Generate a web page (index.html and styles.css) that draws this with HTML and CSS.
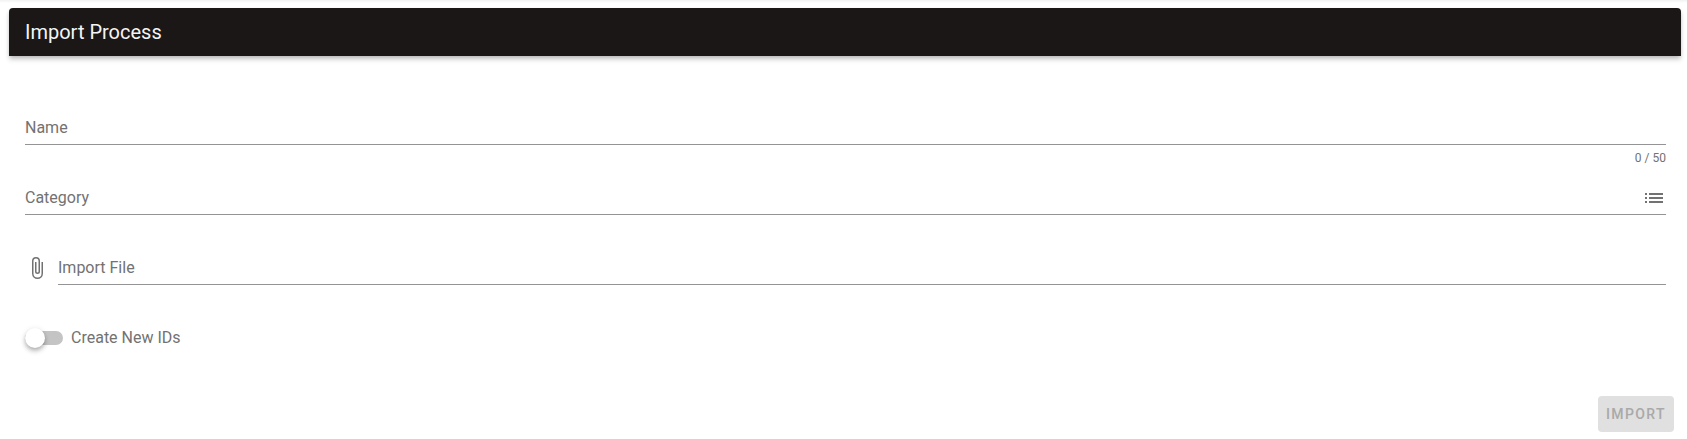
FILE: index.html
```html
<!DOCTYPE html>
<html lang="en">
<head>
    <meta charset="UTF-8">
    <title>Import Process</title>
    <link rel="stylesheet" href="styles.css">
</head>
<body>
    <div class="card">
        <div class="card-title">Import Process</div>
        <form class="card-form">
            <div class="field">
                <div class="field-line"><span class="field-label">Name</span></div>
                <div class="field-details">0 / 50</div>
            </div>
            <div class="field">
                <div class="field-line">
                    <span class="field-label">Category</span>
                    <svg class="icon" viewBox="0 0 24 24"><path d="M3 13h2v-2H3v2zm0 4h2v-2H3v2zm0-8h2V7H3v2zm4 4h14v-2H7v2zm0 4h14v-2H7v2zM7 7v2h14V7H7z"/></svg>
                </div>
                <div class="field-details"></div>
            </div>
            <div class="field field-file">
                <svg class="icon clip" viewBox="0 0 24 24"><path d="M16.5,6V17.5A4,4 0 0,1 12.5,21.5A4,4 0 0,1 8.5,17.5V5A2.5,2.5 0 0,1 11,2.5A2.5,2.5 0 0,1 13.5,5V15.5A1,1 0 0,1 12.5,16.5A1,1 0 0,1 11.5,15.5V6H10V15.5A2.5,2.5 0 0,0 12.5,18A2.5,2.5 0 0,0 15,15.5V5A4,4 0 0,0 11,1A4,4 0 0,0 7,5V17.5A5.5,5.5 0 0,0 12.5,23A5.5,5.5 0 0,0 18,17.5V6H16.5Z"/></svg>
                <div class="field-line"><span class="field-label">Import File</span></div>
            </div>
            <div class="switch-row">
                <div class="switch"><span class="switch-thumb"></span></div>
                <span class="field-label">Create New IDs</span>
            </div>
        </form>
        <div class="card-actions">
            <button class="btn-import" type="button" disabled>Import</button>
        </div>
    </div>
</body>
</html>
```

FILE: styles.css
```css
* {
    box-sizing: border-box;
    margin: 0;
    padding: 0;
    font-family: Roboto, Arial, sans-serif;
}

body {
    background: linear-gradient(#f1f1f1, #fff 3px);
    height: 439px;
    overflow: hidden;
    padding: 8px 6px 0 9px;
}

.card {
    height: 430px;
    background-color: #fff;
    border-radius: 4px;
    display: flex;
    flex-direction: column;
}

.card-title {
    height: 48px;
    line-height: 48px;
    padding: 0 16px;
    font-size: 20px;
    color: #f4f4f4;
    background-color: #1a1716;
    border-radius: 4px 4px 0 0;
    box-shadow: 0 2px 4px -1px rgba(0, 0, 0, 0.2),
                0 4px 5px 0 rgba(0, 0, 0, 0.14);
}

.card-form {
    flex: 1;
    padding: 55px 15px 0 16px;
}

.field {
    height: 70px;
}

.field-line {
    height: 34px;
    flex: 1;
    display: flex;
    align-items: center;
    justify-content: space-between;
    border-bottom: 1px solid #949494;
}

.field-label {
    font-size: 16px;
    color: #727272;
}

.field-details {
    text-align: right;
    font-size: 12px;
    line-height: 12px;
    color: #727272;
    padding-top: 7px;
}

.icon {
    width: 24px;
    height: 24px;
    fill: #727272;
    flex-shrink: 0;
}

.field-file {
    display: flex;
    align-items: flex-start;
    gap: 9px;
}

.clip {
    margin-top: 5px;
}

.switch-row {
    display: flex;
    align-items: center;
    height: 34px;
    gap: 8px;
}

.switch-row .field-label {
    margin-bottom: 2px;
}

.switch {
    position: relative;
    width: 38px;
    height: 14px;
    border-radius: 7px;
    background-color: #c4c4c4;
}

.switch-thumb {
    position: absolute;
    left: 0;
    top: -3px;
    width: 20px;
    height: 20px;
    border-radius: 50%;
    background-color: #fff;
    box-shadow: 0 2px 4px -1px rgba(0, 0, 0, 0.2),
                0 4px 5px 0 rgba(0, 0, 0, 0.14),
                0 1px 6px 0 rgba(0, 0, 0, 0.1);
}

.card-actions {
    display: flex;
    justify-content: flex-end;
    padding: 0 7px 6px 0;
}

.btn-import {
    width: 76px;
    height: 36px;
    border: none;
    border-radius: 4px;
    background-color: #e0e0e0;
    color: #a9a9a9;
    font-size: 14px;
    font-weight: 500;
    letter-spacing: 1.4px;
    text-transform: uppercase;
}
```
